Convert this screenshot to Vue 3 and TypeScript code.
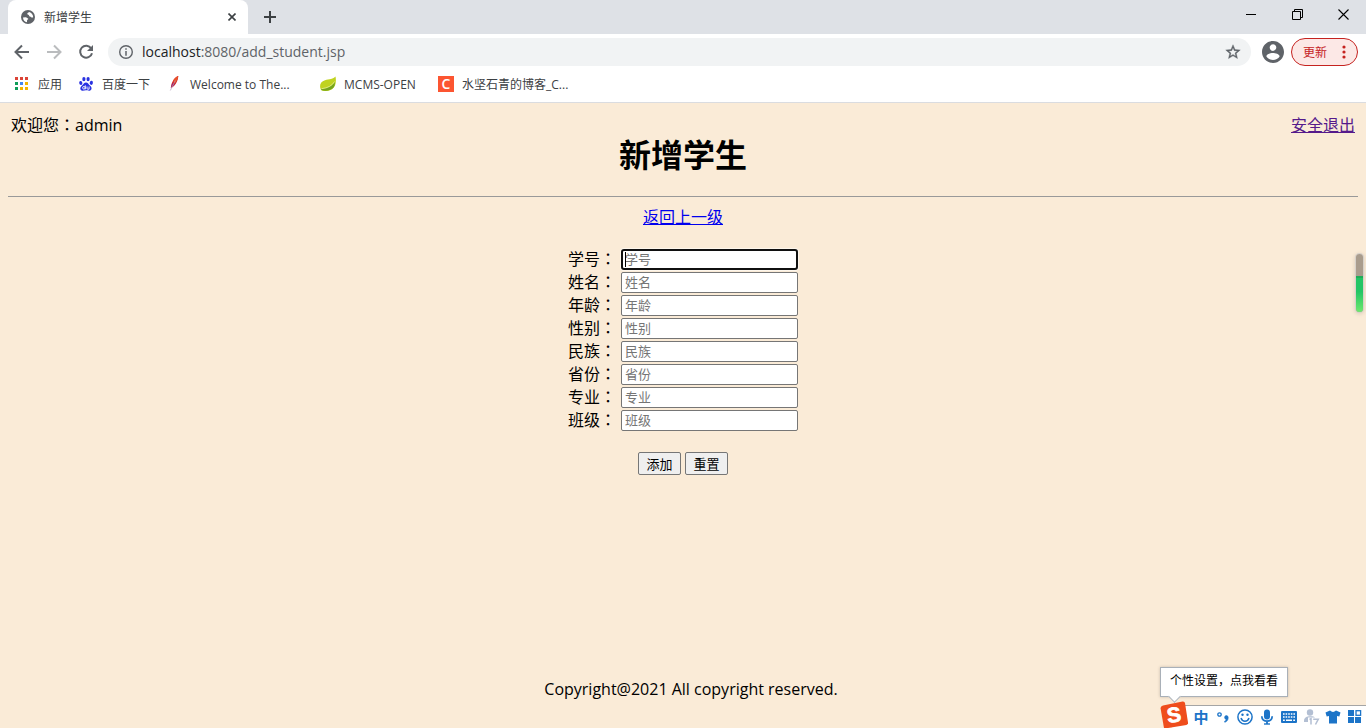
<script setup lang="ts">
import { ref } from 'vue'

interface Field {
  id: string
  label: string
}

const fields: Field[] = [
  { id: 'sno', label: '学号' },
  { id: 'name', label: '姓名' },
  { id: 'age', label: '年龄' },
  { id: 'gender', label: '性别' },
  { id: 'nation', label: '民族' },
  { id: 'province', label: '省份' },
  { id: 'major', label: '专业' },
  { id: 'clazz', label: '班级' },
]

const values = ref<Record<string, string>>({})

function resetForm(): void {
  values.value = {}
}

const appDots: string[] = [
  '#db4437', '#db4437', '#db4437',
  '#0f9d58', '#4285f4', '#f4b400',
  '#0f9d58', '#f4b400', '#f4b400',
]
</script>

<template>
  <div class="window">
    <header class="chrome">
      <div class="tabstrip">
        <div class="tab">
          <svg class="globe" viewBox="0 0 14 14" aria-hidden="true">
            <circle cx="7" cy="7" r="7" fill="#5f6368" />
            <path d="M2 7.4 4.6 7.2C6 7.2 6.1 8.4 7.2 8.6 7.6 9.7 6 9.6 6 10.8V12.3C3.7 12 2 10 2 7.4Z" fill="#fff" />
            <path d="M8.2 1.9C7.3 2.6 6.2 2.8 6.3 4 6.6 4.9 8 4.4 8 5.5 8.2 6.7 9.6 6.2 10.2 7.2 10.7 7.9 11.6 7.6 12.2 7.2 12.2 4.6 10.5 2.5 8.2 1.9Z" fill="#fff" />
          </svg>
          <span class="tab-title">新增学生</span>
          <button class="icon-btn tab-close" aria-label="关闭标签页">
            <svg width="8" height="8" viewBox="0 0 8 8"><path d="M0.5 0.5 7.5 7.5M7.5 0.5 0.5 7.5" stroke="#3c4043" stroke-width="1.6" /></svg>
          </button>
        </div>
        <button class="icon-btn new-tab" aria-label="新标签页">
          <svg width="12" height="12" viewBox="0 0 12 12"><path d="M6 0V12M0 6H12" stroke="#3c4043" stroke-width="2" /></svg>
        </button>
        <div class="win-controls">
          <button class="icon-btn" aria-label="最小化">
            <svg width="11" height="11" viewBox="0 0 11 11"><path d="M0 5.5H10" stroke="#000" /></svg>
          </button>
          <button class="icon-btn" aria-label="还原">
            <svg width="11" height="11" viewBox="0 0 11 11"><path d="M0.5 2.5H8.5V10.5H0.5ZM2.5 2.5V0.5H10.5V8.5H8.5" fill="none" stroke="#000" /></svg>
          </button>
          <button class="icon-btn" aria-label="关闭">
            <svg width="11" height="11" viewBox="0 0 11 11"><path d="M0.5 0.5 10.5 10.5M10.5 0.5 0.5 10.5" stroke="#000" stroke-width="1.1" /></svg>
          </button>
        </div>
      </div>

      <div class="toolbar">
        <button class="icon-btn nav" aria-label="后退">
          <svg width="16" height="16" viewBox="0 0 16 16"><path d="M15 8H2M8 1.5 1.5 8 8 14.5" fill="none" stroke="#5f6368" stroke-width="2" /></svg>
        </button>
        <button class="icon-btn nav" aria-label="前进">
          <svg width="16" height="16" viewBox="0 0 16 16"><path d="M1 8H14M8 1.5 14.5 8 8 14.5" fill="none" stroke="#babcbe" stroke-width="2" /></svg>
        </button>
        <button class="icon-btn nav" aria-label="重新加载">
          <svg width="16" height="16" viewBox="0 0 16 16"><path d="M13.2 4.4A6 6 0 1 0 14 9.2" fill="none" stroke="#5f6368" stroke-width="2" /><path d="M15 1V7H9Z" fill="#5f6368" /></svg>
        </button>
        <div class="omnibox">
          <svg width="14" height="14" viewBox="0 0 14 14" aria-hidden="true"><circle cx="7" cy="7" r="6.3" fill="none" stroke="#5f6368" stroke-width="1.4" /><path d="M7 3.2V4.8M7 6V10.8" stroke="#5f6368" stroke-width="1.5" /></svg>
          <span class="url"><span class="host">localhost</span>:8080/add_student.jsp</span>
          <button class="icon-btn" aria-label="为此标签页添加书签">
            <svg width="16" height="16" viewBox="1 1 22 22"><path d="M22 9.24l-7.19-.62L12 2 9.19 8.63 2 9.24l5.46 4.73L5.82 21 12 17.27 18.18 21l-1.63-7.03L22 9.24zM12 15.4l-3.76 2.27 1-4.28-3.32-2.88 4.38-.38L12 6.1l1.71 4.04 4.38.38-3.32 2.88 1 4.28L12 15.4z" fill="#5f6368" stroke="#5f6368" stroke-width="0.500" /></svg>
          </button>
        </div>
        <button class="icon-btn avatar" aria-label="用户">
          <svg width="22" height="22" viewBox="2 2 20 20"><path d="M12 2C6.48 2 2 6.48 2 12s4.48 10 10 10 10-4.48 10-10S17.52 2 12 2zm0 3c1.66 0 3 1.34 3 3s-1.34 3-3 3-3-1.34-3-3 1.34-3 3-3zm0 14.2c-2.5 0-4.71-1.28-6-3.22.03-1.99 4-3.08 6-3.08 1.99 0 5.97 1.09 6 3.08-1.29 1.94-3.5 3.22-6 3.22z" fill="#5f6368" /></svg>
        </button>
        <button class="update">
          <span>更新</span>
          <svg width="4" height="14" viewBox="0 0 4 14" aria-hidden="true"><g fill="#c5221f"><circle cx="2" cy="2" r="1.6" /><circle cx="2" cy="7" r="1.6" /><circle cx="2" cy="12" r="1.6" /></g></svg>
        </button>
      </div>

      <nav class="bookmarks">
        <a class="bookmark" href="#">
          <svg width="16" height="16" viewBox="0 0 16 16" aria-hidden="true">
            <rect v-for="(c, i) in appDots" :key="i" :x="1 + (i % 3) * 5" :y="1 + Math.floor(i / 3) * 5" width="3" height="3" :fill="c" />
          </svg>
          <span>应用</span>
        </a>
        <a class="bookmark" href="#">
          <svg width="16" height="16" viewBox="0 0 16 16" aria-hidden="true">
            <g fill="#2932e1">
              <ellipse cx="2.8" cy="7" rx="1.6" ry="2.1" transform="rotate(-12 2.8 7)" />
              <ellipse cx="5.9" cy="3.1" rx="1.6" ry="2.2" />
              <ellipse cx="10.1" cy="3.1" rx="1.6" ry="2.2" />
              <ellipse cx="13.3" cy="6.8" rx="1.6" ry="2.1" transform="rotate(12 13.3 6.8)" />
              <path d="M8 6.5C9.9 6.5 10.5 8.4 12.2 9.7 14.4 11.4 13.8 14.5 11.5 14.7 10 14.8 9.3 14.3 8 14.3S5.700 14.800 4.300 14.700C2 14.500 1.600 11.400 3.800 9.700 5.500 8.400 6.100 6.500 8 6.500Z" />
            </g>
            <g fill="none" stroke="#fff" stroke-width="0.9"><circle cx="5.900" cy="11.800" r="1.300" /><path d="M7.300 9.300V13.300M9 10.500V12.400Q9 13.200 9.800 13.200H11.100V10.500" /></g>
          </svg>
          <span>百度一下</span>
        </a>
        <a class="bookmark wide" href="#">
          <svg width="16" height="16" viewBox="0 0 16 16" aria-hidden="true">
            <path d="M12.300 0C9.500 0.600 6.800 4 5.600 8L4.800 11.800C8.800 10.500 12 5.500 12.300 0Z" fill="#d22128" />
            <path d="M12.300 0C9.500 1 8 3.200 7.100 5.200L9.300 7C11 4.500 12 2.200 12.300 0Z" fill="#e9532a" />
            <path d="M6 7.500 4.800 11.800C6.800 11 8 9.500 9 7.600Z" fill="#9e2064" />
            <path d="M9.300 4.500 4.300 14.500" stroke="#b8a0bd" stroke-width="0.700" />
          </svg>
          <span>Welcome to The...</span>
        </a>
        <a class="bookmark medium" href="#">
          <svg width="16" height="16" viewBox="0 0 16 16" aria-hidden="true">
            <path d="M15.500 0.500C13.500 3 9 3.200 5 4.200 0.500 5.500-1 9.500 0.800 13.500 2.500 15.600 8 15.600 12 13.200 16 10.700 16.400 5 15.500 0.500Z" fill="#c0d320" />
            <path d="M14.600 5.500C13.500 9.700 7 12.300 1.500 12.700L1 14C5 15.500 10 14.800 12.800 12.300 14.600 10.700 15.200 8 14.600 5.500Z" fill="#76a51d" />
            <path d="M1.500 12.700Q11 11.800 14.600 5.500" fill="none" stroke="#edf49a" stroke-width="0.800" />
          </svg>
          <span>MCMS-OPEN</span>
        </a>
        <a class="bookmark" href="#">
          <span class="csdn" aria-hidden="true">C</span>
          <span>水坚石青的博客_C...</span>
        </a>
      </nav>
    </header>

    <main class="page">
      <div class="userbar">
        <span>欢迎您<span class="mid">：</span>admin</span>
        <a class="logout" href="#">安全退出</a>
      </div>
      <h1>新增学生</h1>
      <hr />
      <a class="back" href="#">返回上一级</a>

      <form @submit.prevent @reset.prevent="resetForm">
        <div v-for="(f, i) in fields" :key="f.id" class="row">
          <label :for="f.id">{{ f.label }}<span class="mid">：</span></label>
          <div class="control" :class="{ active: i === 0 }">
            <input :id="f.id" v-model="values[f.id]" type="text" :placeholder="f.label" />
          </div>
        </div>
        <div class="actions">
          <button type="submit">添加</button>
          <button type="reset">重置</button>
        </div>
      </form>

      <footer>Copyright@2021 All copyright reserved.</footer>
    </main>

    <div class="gauge"><div class="gauge-fill"></div></div>

    <div class="ime-tip">个性设置，点我看看</div>
    <div class="ime-bar">
      <button class="icon-btn zh" aria-label="中文">中</button>
      <button class="icon-btn" aria-label="中文标点">
        <svg width="16" height="16" viewBox="0 0 16 16"><circle cx="4.500" cy="5.500" r="1.700" fill="none" stroke="#1c74c8" stroke-width="1.300" /><path d="M11 6.600A2 2 0 0 1 13.200 8.600C13.200 11 12 12.600 9.800 13.300L9.500 12.300C10.500 11.800 11.100 11.200 11.200 10.400A1.950 1.950 0 0 1 11 6.600Z" fill="#1c74c8" stroke="#1c74c8" stroke-width="0.600" /></svg>
      </button>
      <button class="icon-btn" aria-label="表情">
        <svg width="16" height="16" viewBox="0 0 16 16"><g fill="none" stroke="#1c74c8" stroke-width="1.500"><circle cx="8" cy="8" r="7.100" /><path d="M4 9Q5 12.300 8 12.300T12 9" /></g><g fill="#1c74c8"><circle cx="5.500" cy="5.700" r="1.200" /><circle cx="10.500" cy="5.700" r="1.200" /></g></svg>
      </button>
      <button class="icon-btn" aria-label="语音">
        <svg width="16" height="16" viewBox="0 0 16 16"><rect x="5" y="0.500" width="6" height="10" rx="3" fill="#1c74c8" /><path d="M2.800 7.300C2.800 13.800 13.200 13.800 13.200 7.300M8 12V15" fill="none" stroke="#1c74c8" stroke-width="1.800" /><path d="M5 15H11" stroke="#1c74c8" stroke-width="1.400" /></svg>
      </button>
      <button class="icon-btn" aria-label="软键盘">
        <svg width="16" height="16" viewBox="0 0 16 16"><rect y="2" width="16" height="12" rx="1" fill="#1c74c8" /><path d="M2 5H14M2 8H14" stroke="#fff" stroke-width="1.500" stroke-dasharray="1.600 1" /><path d="M2 11.300H3.800M5 11.300H11M12.200 11.300H14" stroke="#fff" stroke-width="1.400" /></svg>
      </button>
      <button class="icon-btn" aria-label="用户等级">
        <svg width="18" height="16" viewBox="0 0 18 16"><g fill="#b3bfd3"><circle cx="8" cy="3.500" r="3.200" /><path d="M2 12C2 8.500 5 7.200 8 7.200S12.500 7.600 13 8.600H6V13H2Z" /></g><path d="M7.500 10.500 9 9.700V15.500M11.200 10.200H16.300L13.500 15.500" fill="none" stroke="#b3bfd3" stroke-width="1.500" /></svg>
      </button>
      <button class="icon-btn" aria-label="皮肤">
        <svg width="16" height="16" viewBox="0 0 16 16"><path d="M5 1.500Q8 4.300 11 1.500L15.500 3.500 14.300 7.500 12 7V14.500H4V7L1.700 7.500 0.500 3.500Z" fill="#1c74c8" /></svg>
      </button>
      <button class="icon-btn" aria-label="工具箱">
        <svg width="14" height="14" viewBox="0 0 14 14"><g fill="#1c74c8"><rect width="6" height="6" /><rect y="7" width="6" height="6" /><rect x="7" y="7" width="6" height="6" /></g><rect x="8" y="0.700" width="4.600" height="4.600" fill="none" stroke="#1c74c8" stroke-width="1.300" /></svg>
      </button>
    </div>
    <svg class="sogou" width="28" height="27" viewBox="0 0 28 27" role="img" aria-label="输入法">
      <path d="M3 4.500 22.500 0.500Q24.500 0.200 25 2L28 21.500Q28.200 23.400 26.400 24L8 27H4L0.600 7.500Q0.300 5.200 3 4.500Z" fill="#ef4d1c" />
      <text x="14" y="21" text-anchor="middle" transform="rotate(-8 14 14)" fill="#fff" stroke="#fff" stroke-width="0.800" font-size="21" font-weight="700">S</text>
    </svg>
  </div>
</template>

<style>
body {
  margin: 0;
  overflow: hidden;
}
</style>

<style scoped>
.window {
  position: relative;
  display: flex;
  flex-direction: column;
  min-height: 100vh;
  overflow: hidden;
  background: #faebd7;
  color: #000;
  font-family: "Open Sans", "Noto Sans CJK SC", sans-serif;
  font-size: 16px;
}

.window * {
  box-sizing: border-box;
}

svg {
  display: block;
  flex: none;
}

button,
input {
  font-family: inherit;
}

.icon-btn {
  display: flex;
  align-items: center;
  justify-content: center;
  padding: 0;
  border: 0;
  background: none;
}

.mid {
  font-family: "Noto Sans CJK TC", sans-serif;
}

.chrome {
  border-bottom: 1px solid #dadce0;
  background: #fff;
  font-size: 12px;
  color: #3c4043;
}

.tabstrip {
  display: flex;
  height: 34px;
  padding-left: 8px;
  background: #dee1e6;
}

.tab {
  display: flex;
  align-items: center;
  width: 240px;
  padding: 0 12px 0 13px;
  border-radius: 8px 8px 0 0;
  background: #fff;
}

.globe {
  width: 14px;
  height: 14px;
  margin-right: 9px;
}

.tab-title {
  flex: 1;
}

.tab-close {
  width: 8px;
  height: 16px;
}

.new-tab {
  width: 44px;
}

.win-controls {
  display: flex;
  height: 28px;
  margin-left: auto;
}

.win-controls .icon-btn {
  width: 46px;
}

.toolbar {
  display: flex;
  align-items: center;
  height: 36px;
  padding: 0 8px 0 6px;
}

.nav {
  width: 32px;
  height: 32px;
}

.omnibox {
  display: flex;
  flex: 1;
  align-items: center;
  height: 28px;
  margin-left: 6px;
  padding: 0 10px 0 11px;
  border-radius: 14px;
  background: #f1f3f4;
}

.url {
  flex: 1;
  margin-left: 9px;
  padding-bottom: 2px;
  font-size: 14px;
  color: #5f6368;
}

.host {
  color: #202124;
}

.avatar {
  margin: 0 7px 0 11px;
}

.update {
  display: flex;
  align-items: center;
  gap: 15px;
  height: 28px;
  padding: 0 11px;
  border: 1px solid #c5221f;
  border-radius: 14px;
  background: #fce8e6;
  color: #c5221f;
  font-size: 12px;
}

.bookmarks {
  display: flex;
  align-items: center;
  gap: 16px;
  height: 32px;
  padding: 0 14px 4px;
}

.bookmark {
  display: flex;
  align-items: center;
  gap: 8px;
  color: #3c4043;
  text-decoration: none;
  white-space: nowrap;
}

.wide {
  min-width: 138px;
}

.medium {
  min-width: 102px;
}

.csdn {
  width: 16px;
  height: 16px;
  background: #fc5531;
  color: #fff;
  font-size: 14px;
  font-weight: 600;
  line-height: 16px;
  text-align: center;
}

.page {
  display: flex;
  flex: 1;
  flex-direction: column;
  align-items: center;
  padding: 9px 8px 27px;
}

.userbar {
  display: flex;
  align-items: baseline;
  align-self: stretch;
  justify-content: space-between;
  height: 24px;
  padding: 0 3px;
  line-height: 24px;
}

.logout {
  color: #551a8b;
}

h1 {
  margin: 0;
  font-size: 32px;
  line-height: 38px;
}

hr {
  align-self: stretch;
  height: 1px;
  margin: 22px 0 9px;
  border: 0;
  background: #999;
}

.back {
  line-height: 22px;
  color: #00e;
}

form {
  margin-top: 20px;
}

.row {
  display: flex;
  align-items: flex-start;
  height: 23px;
  padding-top: 1px;
}

label {
  width: 53px;
  line-height: 18px;
}

.control {
  position: relative;
  width: 177px;
  height: 21px;
}

input {
  display: block;
  width: 100%;
  height: 100%;
  padding: 0 3px 2px;
  border: 1px solid #767676;
  border-radius: 2px;
  outline: 0;
  background: #fff;
  font-size: 13px;
}

input::placeholder {
  color: #757575;
}

.active input {
  padding: 0 2px 2px;
  border: 2px solid #101010;
  border-radius: 3px;
  box-shadow: 0 0 0 1px #fff8;
}

.active::after {
  position: absolute;
  top: 3px;
  left: 4px;
  width: 1px;
  height: 15px;
  background: #000;
  content: "";
}

.actions {
  display: flex;
  justify-content: center;
  gap: 4px;
  margin-top: 20px;
}

.actions button {
  min-width: 43px;
  height: 23px;
  padding: 0 6px;
  border: 1px solid #767676;
  border-radius: 2px;
  background: #efefef;
  color: #000;
  font-size: 13px;
  line-height: 20px;
}

footer {
  margin-top: auto;
  padding-left: 16px;
  line-height: 24px;
}

.gauge {
  position: absolute;
  top: 253px;
  right: 2px;
  width: 9px;
  height: 60px;
  padding-top: 22px;
  border: 1px solid #fff8;
  border-radius: 5px;
  overflow: hidden;
  background: #a99c8d;
  box-shadow: 0 1px 4px #0002;
}

.gauge-fill {
  height: 100%;
  border-top: 2px solid #1fae59;
  background: linear-gradient(#23c565 40%, #6ee86e);
}

.ime-tip {
  position: absolute;
  right: 78px;
  bottom: 31px;
  height: 30px;
  padding: 0 9px;
  border: 1px solid #a9b0b8;
  background: #fff;
  box-shadow: 0 0 3px #0003;
  font-size: 12px;
  line-height: 26px;
}

.ime-tip::after {
  position: absolute;
  bottom: -5px;
  left: 9px;
  width: 8px;
  height: 8px;
  border: solid #a9b0b8;
  border-width: 0 1px 1px 0;
  background: #fff;
  transform: rotate(45deg);
  content: "";
}

.ime-bar {
  position: absolute;
  right: 0;
  bottom: 0;
  display: flex;
  align-items: center;
  height: 23px;
  padding-left: 18px;
  border-top: 1px solid #a5a5a5;
  background: #fff;
}

.ime-bar .icon-btn {
  width: 22px;
  height: 22px;
}

.ime-bar .zh {
  padding-bottom: 2px;
  color: #1c74c8;
  font-size: 15px;
  font-weight: 700;
}

.sogou {
  position: absolute;
  right: 178px;
  bottom: 0;
  font-family: "Liberation Sans", sans-serif;
}
</style>
